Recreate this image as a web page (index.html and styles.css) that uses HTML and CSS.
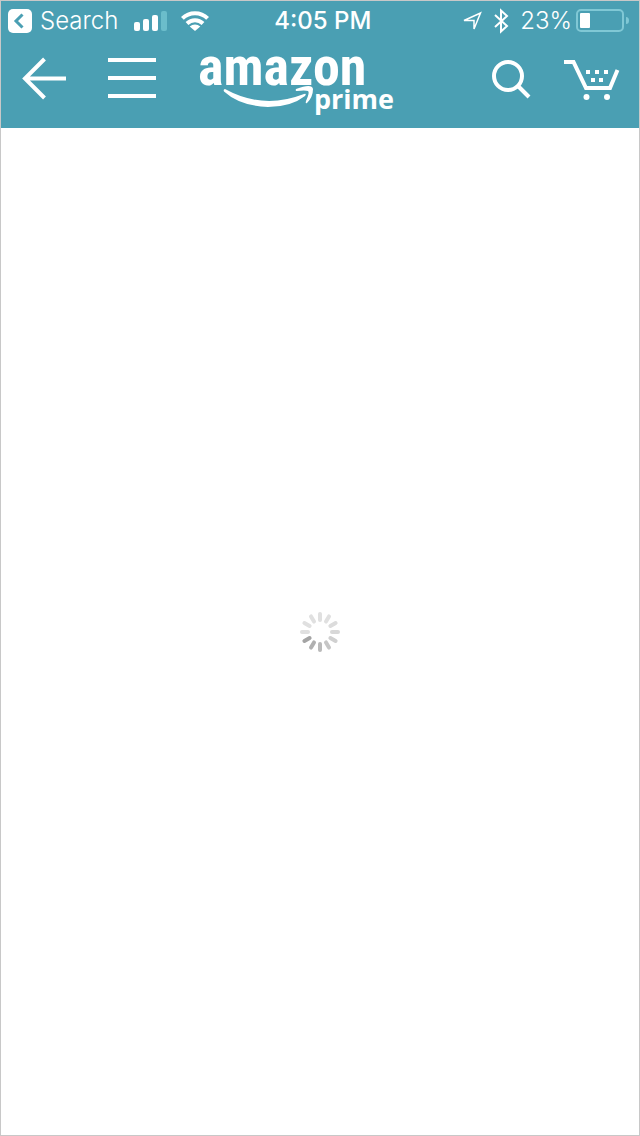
FILE: index.html
```html
<!DOCTYPE html>
<html lang="en">
<head>
<meta charset="utf-8">
<meta name="viewport" content="width=device-width, initial-scale=1">
<title>Amazon Prime</title>
<link rel="stylesheet" href="styles.css">
</head>
<body>
<div class="screen">
  <header class="header">
    <div class="status">
      <button class="return" type="button">
        <svg width="24" height="24" viewBox="0 0 24 24" aria-hidden="true"><rect width="24" height="24" rx="5" fill="#fff"/><path d="M14.500 5.500 8 12l6.500 6.500" fill="none" stroke="#4a9fb3" stroke-width="3"/></svg>
        <span>Search</span>
      </button>
      <svg class="signal" width="34" height="20" viewBox="0 0 34 20" aria-hidden="true"><g fill="#fff"><rect y="11" width="6" height="9" rx="2"/><rect x="9" y="8" width="6" height="12" rx="2"/><rect x="18" y="4" width="6" height="16" rx="2"/></g><rect x="27" width="6" height="20" rx="2" fill="#6bbdcb"/></svg>
      <svg class="wifi" width="28" height="20" viewBox="0 0 28 20" aria-hidden="true"><g fill="none" stroke="#fff" stroke-width="4"><path d="M1.400 7.400a18 18 0 0 1 25.200 0"/><path d="M6 12.500a11.500 11.500 0 0 1 16 0"/></g><path d="M14 20 8.700 15.500a8 8 0 0 1 10.600 0z" fill="#fff"/></svg>
      <time class="time">4:05 PM</time>
      <div class="power">
        <svg width="20" height="20" viewBox="0 0 20 20" aria-hidden="true"><path d="M2 9.500 18.500 2l-6.500 16V9.500z" fill="none" stroke="#fff" stroke-width="1.500"/></svg>
        <svg class="bluetooth" width="14" height="24" viewBox="0 0 14 24" aria-hidden="true"><path d="m1 6 12 11-6 5.500v-21L13 7 1 18" fill="none" stroke="#fff" stroke-width="2"/></svg>
        <span>23%</span>
        <svg class="battery" width="54" height="24" viewBox="0 0 54 24" aria-hidden="true"><rect x="1" y="1" width="46" height="21" rx="4" fill="none" stroke="#80c8d5" stroke-width="2"/><rect x="4" y="4" width="10" height="15" rx="1" fill="#fff"/><path d="M50 8q3 0 3 3.500T50 15z" fill="#80c8d5"/></svg>
      </div>
    </div>
    <nav class="nav" aria-label="Main">
      <button class="back" type="button" aria-label="Back"><svg width="46" height="42" viewBox="0 0 46 42"><path d="M23.500 2 4 21.500 23.500 41M4 21.500h41" fill="none" stroke="#fff" stroke-width="4"/></svg></button>
      <button class="menu" type="button" aria-label="Menu"><svg width="48" height="42" viewBox="0 0 48 42"><path d="M0 3h48M0 21h48M0 39h48" stroke="#fff" stroke-width="4"/></svg></button>
      <a class="logo" href="#" aria-label="Amazon Prime home">
        <svg width="200" height="68" viewBox="0 0 200 68"><g fill="#fff"><text class="brand" x="-1" y="36">amazon</text><text class="tier" x="115" y="60">prime</text><path d="M26 40Q64 61 105 45q3-1 1 2-14 11-37 11-28-1-44-15.500-1-2 1-2.500z"/><path d="M97 40q16-6 17 0 0 8-6 14-2 1-1-2 4-9 2-10-3-1-11 0-2 0-1-2z"/></g></svg>
      </a>
      <button class="search" type="button" aria-label="Search"><svg width="42" height="42" viewBox="0 0 42 42"><circle cx="17" cy="19" r="14" fill="none" stroke="#fff" stroke-width="4"/><path d="m27 29 11 11" stroke="#fff" stroke-width="4"/></svg></button>
      <button class="cart" type="button" aria-label="Cart"><svg width="56" height="44" viewBox="0 0 56 44"><path d="M0 6h9.500l12.500 26H46L53.500 14" fill="none" stroke="#fff" stroke-width="4"/><g fill="#fff"><path d="M22 14h4v4h-4zm9 0h4v4h-4zm9 0h4v4h-4zM27 22h4v4h-4zm8 0h4v4h-4z"/><circle cx="22.500" cy="41" r="3"/><circle cx="43" cy="41" r="3"/></g></svg></button>
    </nav>
  </header>
  <main class="content">
    <svg width="40" height="40" viewBox="-20 -20 40 40" role="img" aria-label="Loading"><g stroke-width="4" stroke-linecap="round" stroke="#e0e0e0"><path d="M0-12v-6"/><path d="M0-12v-6" transform="rotate(30)"/><path d="M0-12v-6" transform="rotate(60)" stroke="#dcdcdc"/><path d="M0-12v-6" transform="rotate(90)" stroke="#d8d8d8"/><path d="M0-12v-6" transform="rotate(120)" stroke="#d0d0d0"/><path d="M0-12v-6" transform="rotate(150)" stroke="#c6c6c6"/><path d="M0-12v-6" transform="rotate(180)" stroke="#bababa"/><path d="M0-12v-6" transform="rotate(210)" stroke="#b0b0b0"/><path d="M0-12v-6" transform="rotate(240)" stroke="#a4a4a4"/><path d="M0-12v-6" transform="rotate(270)"/><path d="M0-12v-6" transform="rotate(300)"/><path d="M0-12v-6" transform="rotate(330)"/></g></svg>
  </main>
</div>
</body>
</html>
```
FILE: styles.css
```css
* { box-sizing: border-box; }
body { margin: 0; background: #fff; font-family: Inter, "Liberation Sans", sans-serif; }
svg { display: block; flex: none; overflow: visible; }
button { padding: 0; border: 0; background: none; color: inherit; font: inherit; cursor: pointer; }
.screen { display: flex; flex-direction: column; min-height: 100vh; border: 1px solid #c8c8c8; }
.header { background: #4a9fb3; color: #fff; }
.status { display: flex; align-items: center; height: 39px; padding: 0 9px 0 7px; font-size: 24px; line-height: 28px; }
.return { display: flex; align-items: center; gap: 8px; font-weight: 300; }
.signal { margin-left: 16px; }
.wifi { margin-left: 13px; }
.time { margin-left: 65px; font-weight: 500; }
.power { display: flex; align-items: center; margin-left: auto; font-weight: 300; }
.bluetooth { margin: 0 12px; }
.battery { margin-left: 4px; }
.nav { display: flex; align-items: center; height: 88px; padding: 0 19px 12px 20px; }
.menu { margin-left: 41px; }
.logo { margin: 10px 0 0 43px; }
.search { margin-left: auto; }
.cart { margin-left: 31px; }
.brand { font: bold 54px "Roboto Condensed", Roboto, sans-serif; }
.tier { font: bold 27px "Open Sans", sans-serif; }
.content { display: flex; flex: 1; align-items: center; justify-content: center; }
```
